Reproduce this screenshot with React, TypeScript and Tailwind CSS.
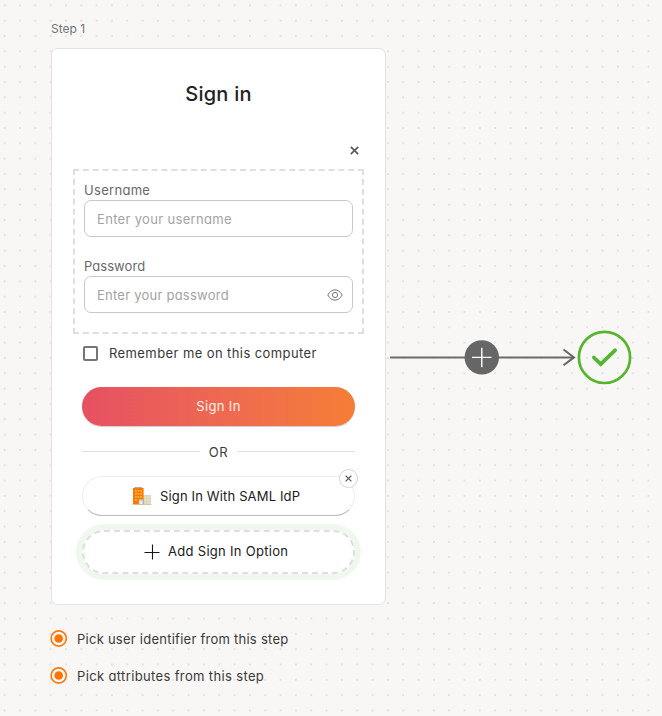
import type { ReactNode } from 'react';

const Building = () => (
  <svg width="20" height="20" viewBox="0 0 20 20" className="mr-[8px] shrink-0">
    <rect x="11" y="9" width="8" height="9.5" fill="#cfd8dc" />
    <path d="M12.5 10.5h2v1.7h-2zM15.7 10.5h2v1.7h-2zM12.5 13.3h2V15h-2zM15.7 13.3h2V15h-2zM15.7 16h2v1.6h-2z" fill="#ffe08a" />
    <path d="M1 2h10.6v16.5H1z" fill="#f9780a" />
    <path d="M2.5 1h7.5v1H2.5z" fill="#a5adb0" />
    <path d="M3 4h1.7v1.7H3zM5.7 4h1.7v1.7H5.7zM8.4 4h1.7v1.7H8.4zM3 7h1.7v1.7H3zM5.7 7h1.7v1.7H5.7zM8.4 7h1.7v1.7H8.4zM3 10h1.7v1.7H3zM5.7 10h1.7v1.7H5.7zM8.4 10h1.7v1.7H8.4zM3 13h1.7v1.7H3z" fill="#ffb52e" />
    <path d="M6.7 13.3h4.6v5.2H6.7z" fill="#b0bec5" />
    <path d="M7.6 14.5h2.8v4H7.6z" fill="#eceff1" />
    <path d="M.5 18h18.8v.9H.5z" fill="#e6bd88" />
  </svg>
);

const Close = ({ size }: { size: number }) => (
  <svg width={size} height={size} viewBox="0 0 9 9" fill="none" stroke="#5c5c5c" strokeWidth="1.7">
    <path d="M.8.8l7.4 7.4M8.2.8L.8 8.2" />
  </svg>
);

const Field = ({ label, hint, children }: { label: ReactNode; hint: ReactNode; children?: ReactNode }) => (
  <div className="h-[76px]">
    <div className="h-[19px] text-[13px] leading-[18px] text-[#68686c]">{label}</div>
    <div className="flex h-[37px] items-center justify-between rounded-[7px] border border-[#c9c9c9] pr-[9px] pl-3 text-[13px] text-[#a3a3a3]">
      {hint}
      {children}
    </div>
  </div>
);

const Radio = ({ children }: { children: ReactNode }) => (
  <div className="-ml-px flex h-[37px] items-center text-[13px] text-[#3a3a3a]">
    <svg width="17" height="17" viewBox="0 0 17 17" className="mr-[10px]">
      <circle cx="8.7" cy="8.5" r="7.6" fill="none" stroke="#fb7a0c" strokeWidth="1.6" />
      <circle cx="8.7" cy="8.5" r="4.3" fill="#ff7300" />
    </svg>
    {children}
  </div>
);

export default function App() {
  return (
    <div className="flex h-[716px] w-[662px] overflow-hidden bg-[#f8f7f5] bg-[radial-gradient(circle,#e2e1e0_0.9px,transparent_1.2px)] bg-[size:15.333px_15.333px] bg-position-[-3px_-2.3px] pl-[51px] font-['Inter','Liberation_Sans',sans-serif] font-normal whitespace-nowrap [font-feature-settings:'cv11']">
      <div className="w-[335px] shrink-0 pt-[19px]">
        <div className="h-[29px] text-[12px] leading-[20px] text-[#73737b]"><span>Step 1</span></div>
        <div className="h-[557px] rounded-[7px] border border-[#e3e3e3] bg-white">
          <h1 className="h-[97px] pt-[30px] text-center text-[20px] leading-[30px] font-medium text-[#222]"><span className="tracking-[0.25px]">Sign in</span></h1>
          <div className="flex h-[23px] justify-end pr-[26px]"><Close size={9} /></div>
          <div className="ml-[21px] h-[165px] w-[291px] border-2 border-dashed border-[#dfdfdf] px-[9px] pt-[10px]">
            <Field label={<span className="tracking-[0.3px]">Username</span>} hint={<span className="pt-[3px] tracking-[0.33px]">Enter your username</span>} />
            <Field label={<span className="tracking-[0.05px]">Password</span>} hint={<span className="pt-[3px] tracking-[0.24px]">Enter your password</span>}>
              <svg width="16" height="14" viewBox="0 0 16 14" fill="none" stroke="#77777b" strokeWidth="1">
                <path d="M.8 7C4.5.1 11.5.1 15.2 7C11.5 13.9 4.5 13.9.8 7z" />
                <circle cx="8" cy="7" r="2.6" />
              </svg>
            </Field>
          </div>
          <div className="flex h-[38px] items-center pl-[31px] text-[13px] text-[#383838]">
            <span className="mr-[11px] size-[15px] rounded-[2px] border-2 border-[#757575]" />
            <span className="pt-px tracking-[0.41px]">Remember me on this computer</span>
          </div>
          <div className="mt-[15px] ml-[30px] flex h-[39px] w-[273px] items-center justify-center rounded-full bg-linear-to-r from-[#e65062] to-[#f57e36] text-[13px] text-[#fff1eb] shadow-[0_1px_1px_rgba(0,0,0,0.2)]"><span className="tracking-[0.35px]">Sign In</span></div>
          <div className="ml-[30px] flex h-[50px] w-[273px] items-center text-[13px] text-[#3d3d3d]">
            <span className="h-px flex-1 bg-[#dedede]" />
            <span className="w-[38px] pt-[4px] text-center tracking-[0.5px]">OR</span>
            <span className="h-px flex-1 bg-[#dedede]" />
          </div>
          <div className="relative ml-[30px] flex h-[40px] w-[273px] items-center rounded-full border border-[#eeeeee] border-b-[#bdbdbd] pl-[49px] text-[13px] text-[#202020]">
            <Building />
            <span className="pt-px tracking-[0.15px]">Sign In With SAML IdP</span>
            <span className="absolute -top-[8px] right-[-4px] flex size-[19px] items-center justify-center rounded-full border border-[#d5d5d5] bg-white"><Close size={7} /></span>
          </div>
          <div className="mt-[8px] ml-[24px] h-[56px] w-[285px] rounded-full bg-[#f0f7ef] p-[6px]">
            <div className="flex h-[44px] items-center rounded-full border-2 border-dashed border-[#dedede] bg-white pl-[60px] text-[13px] text-[#202020]">
              <svg width="16" height="16" viewBox="0 0 16 16" className="mr-[8px]" stroke="#171717" strokeWidth="1.1"><path d="M.5 8.5h15M8.5.5v15" /></svg>
              <span className="tracking-[0.3px]">Add Sign In Option</span>
            </div>
          </div>
        </div>
        <div className="pt-[15px]">
          <Radio><span className="pt-[2px] tracking-[0.25px]">Pick user identifier from this step</span></Radio>
          <Radio><span className="pt-[2px] tracking-[0.36px]">Pick attributes from this step</span></Radio>
        </div>
      </div>
      <svg width="250" height="56" viewBox="0 0 250 56" className="mt-[329px] ml-[4px] shrink-0" fill="none">
        <path d="M0 28.4h184" stroke="#6b6b6b" strokeWidth="2" />
        <path d="M173.5 20.5l10.5 7.9-10.5 7.9" stroke="#666" strokeWidth="2" />
        <circle cx="91.8" cy="28.4" r="17.2" fill="#666" />
        <path d="M82 28.4h19.5M91.8 18.7v19.5" stroke="white" strokeWidth="1.4" />
        <circle cx="214.5" cy="28.4" r="25.6" stroke="#55b62e" strokeWidth="2.7" />
        <path d="M203.8 28.5l7 6.7 14.4-14" stroke="#55b62e" strokeWidth="3.7" strokeLinecap="round" strokeLinejoin="miter" />
      </svg>
    </div>
  );
}
